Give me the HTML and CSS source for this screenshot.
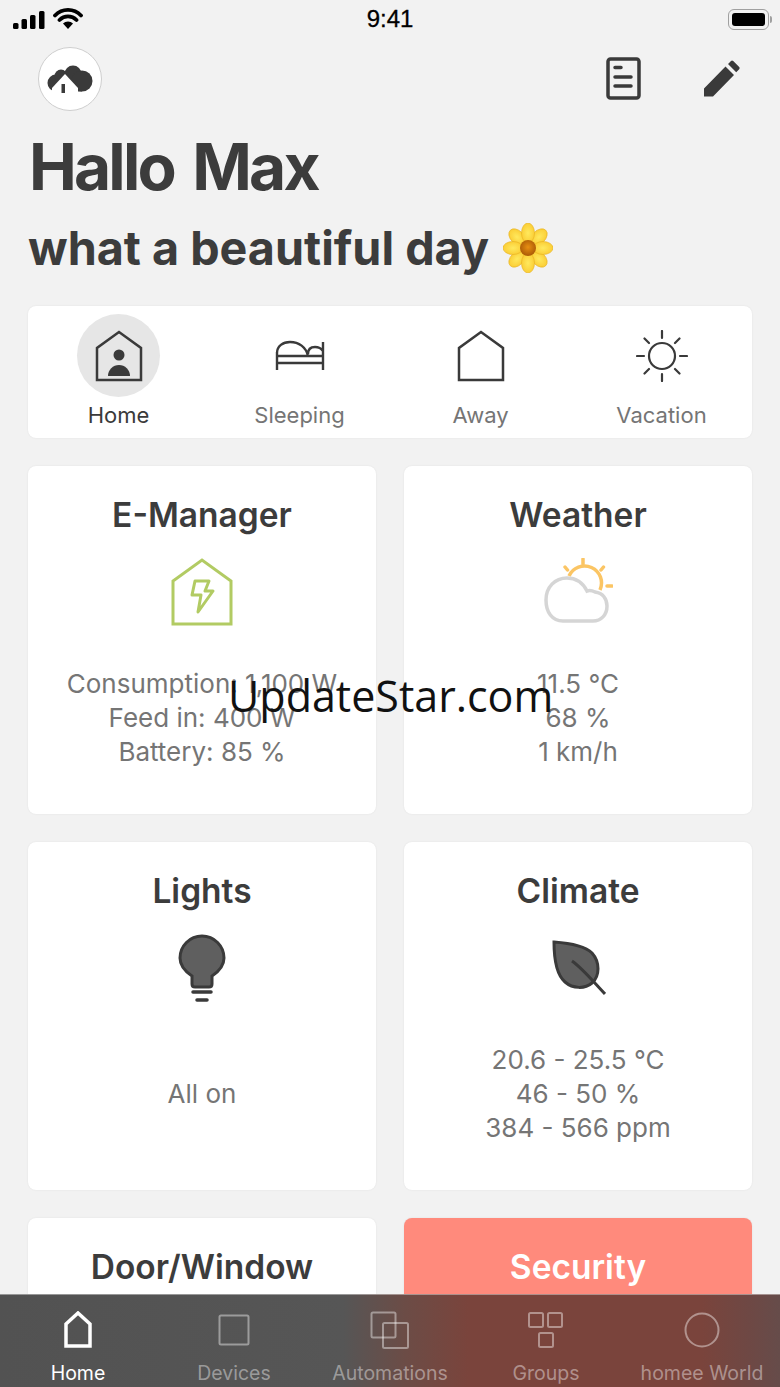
FILE: index.html
```
<!DOCTYPE html>
<html lang="en">
<head>
<meta charset="utf-8">
<title>homee</title>
<link rel="stylesheet" href="styles.css">
</head>
<body>
<div class="screen">
  <div class="status">
    <div class="status-left">
      <svg width="32" height="18" viewBox="0 0 32 18"><rect x="0" y="12" width="5.500" height="6" rx="1.500"/><rect x="8.500" y="8" width="5.500" height="10" rx="1.500"/><rect x="17" y="4" width="5.500" height="14" rx="1.500"/><rect x="26" y="0" width="5.500" height="18" rx="1.500"/></svg>
      <svg width="30" height="22" viewBox="0 0 30 22"><path d="M2 7.500a18 18 0 0 1 26 0M6.500 12a12 12 0 0 1 17 0" fill="none" stroke="#000" stroke-width="3.800" stroke-linecap="round"/><path d="M10 15.500a7 7 0 0 1 10 0L15 21z"/></svg>
    </div>
    <div class="clock">9:41</div>
    <div class="battery"><span class="battery-body"><span class="battery-fill"></span></span><span class="battery-cap"></span></div>
  </div>

  <div class="topbar">
    <div class="logo">
      <svg width="46" height="28" viewBox="0 0 46 28"><g fill="#3a3a3a"><circle cx="9" cy="18" r="8.500"/><circle cx="14" cy="11" r="6.500"/><circle cx="26" cy="9" r="8.500"/><circle cx="35" cy="16" r="10.500"/><rect x="9" y="14" width="26" height="12.500"/></g><path d="M18 9 5 23v5h26v-5z" fill="#fff"/><rect x="14.500" y="19" width="3.500" height="9" fill="#3a3a3a"/></svg>
    </div>
    <div class="top-actions">
      <svg width="36" height="44" viewBox="0 0 36 44"><rect x="2" y="2" width="31" height="39" rx="2.500" fill="none" stroke="#3a3a3a" stroke-width="3.500"/><path d="M9 10.500h6M9 20h16M9 29h16" stroke="#3a3a3a" stroke-width="3.500" stroke-linecap="round"/></svg>
      <svg width="38" height="38" viewBox="0 0 38 38"><path fill="#3a3a3a" d="M1 28.500 22.500 6.500l8.500 8.500L10 36.500H1zM25 4l3-3q1-1 2.200 0l6 6q1 1 0 2.200l-3 3z"/></svg>
    </div>
  </div>

  <h1 class="title">Hallo Max</h1>
  <h2 class="subtitle">what a beautiful day
    <svg class="flower" width="50" height="50" viewBox="0 0 50 50">
      <defs>
        <radialGradient id="petal" cx="50%" cy="50%" r="60%"><stop offset="0%" stop-color="#ffe95e"/><stop offset="100%" stop-color="#fac92e"/></radialGradient>
        <radialGradient id="heart" cx="50%" cy="45%" r="55%"><stop offset="0%" stop-color="#e88f12"/><stop offset="100%" stop-color="#ab5a06"/></radialGradient>
      </defs>
      <g fill="url(#petal)" stroke="#e9b522" stroke-width=".7">
        <ellipse cx="14" cy="14" rx="6.500" ry="9.500" transform="rotate(-45 14 14)"/>
        <ellipse cx="36" cy="14" rx="6.500" ry="9.500" transform="rotate(45 36 14)"/>
        <ellipse cx="14" cy="36" rx="6.500" ry="9.500" transform="rotate(45 14 36)"/>
        <ellipse cx="36" cy="36" rx="6.500" ry="9.500" transform="rotate(-45 36 36)"/>
        <ellipse cx="25" cy="10" rx="6.500" ry="10"/>
        <ellipse cx="25" cy="40" rx="6.500" ry="10"/>
        <ellipse cx="10" cy="25" rx="10" ry="6.500"/>
        <ellipse cx="40" cy="25" rx="10" ry="6.500"/>
      </g>
      <circle cx="25" cy="25" r="8" fill="url(#heart)"/>
    </svg>
  </h2>

  <div class="modes">
    <div class="mode active">
      <div class="mode-icon">
        <svg width="48" height="52" viewBox="0 0 48 52"><path d="M2 50V18L24 2l22 16v32z" fill="none" stroke="#3a3a3a" stroke-width="2.500"/><circle cx="24" cy="25" r="5.500" fill="#3a3a3a"/><path d="M13 46a11 11 0 0 1 22 0z" fill="#3a3a3a"/></svg>
      </div>
      <span>Home</span>
    </div>
    <div class="mode">
      <div class="mode-icon">
        <svg width="50" height="32" viewBox="0 0 50 32"><path d="M2 30V12M48 2v28M2 16h46M2 23h46M2 13C2 6 8 2 15 2c9 0 16 5 18 14M33 14c0-5 3-7 7-7 3 0 6 1 8 4" fill="none" stroke="#3a3a3a" stroke-width="2.400"/></svg>
      </div>
      <span>Sleeping</span>
    </div>
    <div class="mode">
      <div class="mode-icon">
        <svg width="48" height="52" viewBox="0 0 48 52"><path d="M2 50V18L24 2l22 16v32z" fill="none" stroke="#3a3a3a" stroke-width="2.500"/></svg>
      </div>
      <span>Away</span>
    </div>
    <div class="mode">
      <div class="mode-icon">
        <svg width="52" height="52" viewBox="0 0 52 52"><circle cx="26" cy="26" r="13" fill="none" stroke="#3a3a3a" stroke-width="2.200"/><path d="M26 1v7M26 44v7M1 26h7M44 26h7M8.500 8.500l4.500 4.500M39 39l4.500 4.500M43.500 8.500 39 13M13 39l-4.500 4.500" stroke="#3a3a3a" stroke-width="2.200" stroke-linecap="round"/></svg>
      </div>
      <span>Vacation</span>
    </div>
  </div>

  <div class="grid">
    <div class="card">
      <h3>E-Manager</h3>
      <div class="card-icon">
        <svg width="62" height="68" viewBox="0 0 62 68"><path d="M2 66V23L31 2l29 21v43z" fill="none" stroke="#b2cb63" stroke-width="3"/><path d="M24 23h14l-4 10h8L27 54l3-17h-9z" fill="none" stroke="#b2cb63" stroke-width="3" stroke-linejoin="round"/></svg>
      </div>
      <p>Consumption: 1,100 W<br>Feed in: 400 W<br>Battery: 85 %</p>
    </div>
    <div class="card">
      <h3>Weather</h3>
      <div class="card-icon">
        <svg width="70" height="68" viewBox="0 0 70 68"><path d="M26 18A17 17 0 0 1 57 32" fill="none" stroke="#fbc564" stroke-width="3.500"/><path d="M40 1v5M22 9l2.500 3M60.500 9 58 12M64 28h5" stroke="#fbc564" stroke-width="3.500" stroke-linecap="round"/><path d="M20 63C9 63 3 54 3 42 3 29 12 20 24 20c9 0 16 5 20 13 3-1 6 0 8 1 8 1 12 7 12 14 0 9-6 15-14 15z" fill="#fff" stroke="#d5d5d5" stroke-width="3.500"/></svg>
      </div>
      <p>11.5 °C<br>68 %<br>1 km/h</p>
    </div>
    <div class="card">
      <h3>Lights</h3>
      <div class="card-icon">
        <svg width="48" height="68" viewBox="0 0 48 68"><path d="M14 50V42C8 38 2 33 2 24a22 22 0 0 1 44 0c0 9-6 14-12 18v8c0 2-1 3-3 3H17c-2 0-3-1-3-3z" fill="#5f5f5f" stroke="#3a3a3a" stroke-width="3"/><path d="M15 58h18M19 66h10" stroke="#3a3a3a" stroke-width="3.500" stroke-linecap="round"/></svg>
      </div>
      <p>All on</p>
    </div>
    <div class="card">
      <h3>Climate</h3>
      <div class="card-icon">
        <svg width="56" height="56" viewBox="-2 0 56 56"><path d="M2 2c14 1 30 3 38 11 8 9 8 23 0 30-7 6-19 6-27-1C5 35 2 18 2 2z" fill="#5f5f5f" stroke="#3a3a3a" stroke-width="3"/><path d="M20 21c10 7 19 18 33 33" fill="none" stroke="#3a3a3a" stroke-width="3"/></svg>
      </div>
      <p>20.6 - 25.5 °C<br>46 - 50 %<br>384 - 566 ppm</p>
    </div>
    <div class="card">
      <h3>Door/Window</h3>
    </div>
    <div class="card alert">
      <h3>Security</h3>
    </div>
  </div>

  <div class="watermark">UpdateStar.com</div>

  <nav class="tabbar">
    <div class="tab current">
      <svg width="28" height="38" viewBox="0 0 28 38"><path d="M2 35V13L14 2l12 11v22z" fill="none" stroke="#fff" stroke-width="3.500"/></svg>
      <span>Home</span>
    </div>
    <div class="tab">
      <svg width="32" height="32" viewBox="0 0 32 32"><rect x="1.500" y="1.500" width="29" height="29" rx="1.500" fill="none" stroke="currentColor" stroke-width="2"/></svg>
      <span>Devices</span>
    </div>
    <div class="tab">
      <svg width="40" height="38" viewBox="0 0 40 38"><rect x="1.500" y="1.500" width="24" height="25" rx="1.500" fill="none" stroke="currentColor" stroke-width="2"/><rect x="13" y="12" width="25" height="25" rx="1.500" fill="none" stroke="currentColor" stroke-width="2"/></svg>
      <span>Automations</span>
    </div>
    <div class="tab">
      <svg width="36" height="36" viewBox="0 0 36 36"><rect x="1" y="1" width="14" height="14" rx="1.500" fill="none" stroke="currentColor" stroke-width="2"/><rect x="20" y="1" width="14" height="14" rx="1.500" fill="none" stroke="currentColor" stroke-width="2"/><rect x="11" y="21" width="14" height="14" rx="1.500" fill="none" stroke="currentColor" stroke-width="2"/></svg>
      <span>Groups</span>
    </div>
    <div class="tab">
      <svg width="36" height="36" viewBox="0 0 36 36"><circle cx="18" cy="18" r="16.500" fill="none" stroke="currentColor" stroke-width="2"/></svg>
      <span>homee World</span>
    </div>
  </nav>
</div>
</body>
</html>
```
FILE: styles.css
```
* { box-sizing: border-box; }
html, body { margin: 0; padding: 0; }
body { font-family: Inter, "Liberation Sans", sans-serif; background: #f2f2f2; color: #3a3a3a; }
svg { display: block; }
.screen { position: relative; width: 780px; height: 1387px; overflow: hidden; background: #f2f2f2; }

.status { display: grid; grid-template-columns: 1fr auto 1fr; align-items: center; height: 40px; padding: 0 8px 2px 8px; }
.status-left { display: flex; align-items: center; gap: 8px; margin-left: 5px; }
.status-left svg:first-child { margin-top: 2px; }
.clock { font-family: "Liberation Sans", sans-serif; font-size: 24px; font-weight: 400; color: #000; -webkit-text-stroke: .3px #000; }
.battery { display: flex; align-items: center; justify-content: flex-end; gap: 1px; }
.battery-body { display: block; width: 41px; height: 21px; padding: 3px; border: 1.500px solid #a0a0a0; border-radius: 6px; }
.battery-fill { display: block; height: 100%; background: #000; border-radius: 3px; }
.battery-cap { display: block; width: 2px; height: 7px; background: #a0a0a0; border-radius: 0 2px 2px 0; }

.topbar { display: flex; align-items: center; justify-content: space-between; padding: 7px 39px 0 38px; }
.logo { display: flex; align-items: center; justify-content: center; width: 64px; height: 64px; border-radius: 50%; background: #fff; border: 1px solid #cfcfcf; }
.top-actions { display: flex; align-items: center; gap: 61px; }

.title { margin: 17px 0 0 29px; font-size: 64px; line-height: 78px; font-weight: 700; letter-spacing: -2.800px; word-spacing: 6px; color: #3c3c3c; }
.subtitle { display: flex; align-items: center; gap: 14px; margin: 12px 0 0 28px; font-size: 46.700px; line-height: 60px; font-weight: 700; color: #3c3c3c; }

.modes { display: grid; grid-template-columns: repeat(4, 1fr); height: 132px; margin: 28px 28px 0; background: #fff; border-radius: 8px; box-shadow: 0 0 2px rgba(0,0,0,.08); padding: 8px 0 0; }
.mode { display: flex; flex-direction: column; align-items: center; font-size: 22px; color: #757575; }
.mode-icon { display: flex; align-items: center; justify-content: center; width: 83px; height: 83px; border-radius: 50%; }
.mode.active .mode-icon { background: #e6e6e6; }
.mode.active { color: #3a3a3a; }
.mode span { margin-top: 4px; line-height: 28px; }

.grid { display: grid; grid-template-columns: 348px 348px; gap: 28px; margin: 28px 28px 0; }
.card { height: 348px; background: #fff; border-radius: 8px; box-shadow: 0 0 2px rgba(0,0,0,.08); padding: 28px 0 0; text-align: center; }
.card h3 { margin: 0; font-size: 33.500px; line-height: 42px; font-weight: 600; color: #3c3c3c; }
.card-icon { display: flex; align-items: center; justify-content: center; height: 68px; margin-top: 22px; }
.card p { display: flex; align-items: center; justify-content: center; height: 102px; margin: 41px 0 0; font-size: 26px; line-height: 34px; color: #757575; }
.card.alert { background: #ff8a7c; }
.card.alert h3 { color: #fff; }

.watermark { position: absolute; left: 228px; top: 667px; font-family: "Open Sans", sans-serif; font-size: 43px; line-height: 58px; color: #111; white-space: nowrap; }

.tabbar { position: absolute; left: 0; right: 0; bottom: 0; height: 93px; display: grid; grid-template-columns: repeat(5, 156px); background: linear-gradient(90deg, #525252 0, #565656 44%, #6c4c46 52%, #7a443c 60%, #7a443c 90%, #6e4844 96%, #664c4a 100%); border-top: 1px solid rgba(255,255,255,.4); }
.tab { position: relative; display: flex; flex-direction: column; align-items: center; justify-content: flex-start; color: rgba(255,255,255,.42); font-size: 19.500px; }
.tab svg { height: 38px; margin-top: 16px; }
.tab span { position: absolute; bottom: 2px; white-space: nowrap; line-height: 24px; }
.tab.current { color: #fff; }
```
